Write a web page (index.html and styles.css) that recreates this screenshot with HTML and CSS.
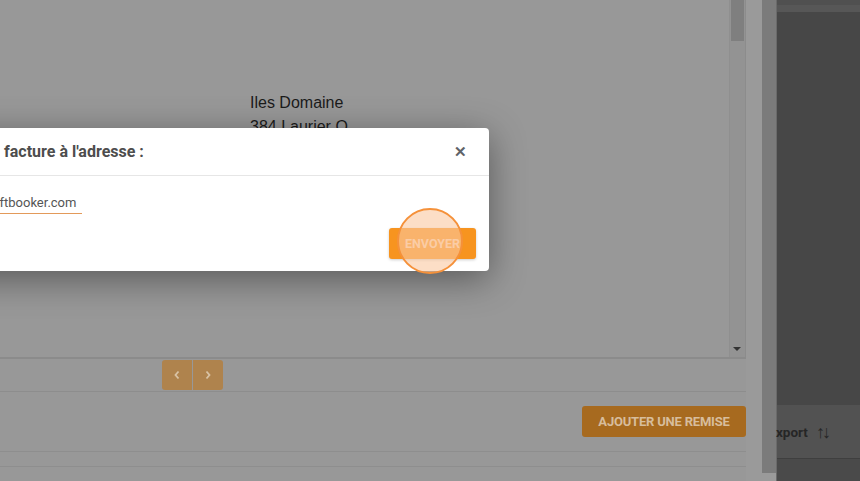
FILE: index.html
```html
<!DOCTYPE html>
<html lang="fr">
<head>
<meta charset="utf-8">
<title>Facture</title>
<link rel="stylesheet" href="styles.css">
</head>
<body>
<div class="screen">
  <div class="panel">
    <div class="doc">
      <div class="doc-content">
        <div class="addr">
          <p>Iles Domaine</p>
          <p>384 Laurier O</p>
        </div>
        <p class="date">Montréal, le 26/05/2022</p>
      </div>
      <div class="doc-scroll">
        <div class="doc-thumb"></div>
        <div class="doc-arrow"></div>
      </div>
    </div>
    <div class="pager">
      <button class="pg-btn"><svg width="8" height="10" viewBox="0 0 8 10"><path d="M5.5 1.5 L2.5 5 L5.5 8.5" fill="none" stroke="#d9c3a5" stroke-width="1.8"/></svg></button>
      <button class="pg-btn"><svg width="8" height="10" viewBox="0 0 8 10"><path d="M2.5 1.5 L5.5 5 L2.5 8.5" fill="none" stroke="#d9c3a5" stroke-width="1.8"/></svg></button>
    </div>
    <div class="actions">
      <button class="remise">Ajouter une remise</button>
    </div>
    <div class="row-thin"></div>
    <div class="row-rest"></div>
  </div>
  <div class="gap-strip"></div>
  <div class="vscroll"><div class="vthumb"></div></div>
  <div class="dark">
    <div class="dark-top"></div>
    <div class="dark-fill"></div>
    <div class="dark-band"><span class="xport">xport</span><span class="sort">↑↓</span></div>
    <div class="dark-fill2"></div>
  </div>

  <div class="modal">
    <div class="modal-head">
      <span class="modal-title">Envoyer la facture à l'adresse :</span>
      <span class="close">✕</span>
    </div>
    <div class="modal-body">
      <span class="email">info@draftbooker.com</span>
    </div>
    <div class="modal-foot">
      <button class="send">Envoyer</button>
    </div>
  </div>
  <div class="spot"></div>
</div>
</body>
</html>
```

FILE: styles.css
```css
* { box-sizing: border-box; }
html, body { margin: 0; padding: 0; }
body {
  width: 860px;
  height: 481px;
  overflow: hidden;
  font-family: Roboto, "Liberation Sans", Arial, sans-serif;
  background: #989898;
}
p { margin: 0; }
button { font-family: inherit; border: 0; padding: 0; }

.screen {
  position: relative;
  display: flex;
  width: 860px;
  height: 481px;
}

.panel {
  width: 746px;
  display: flex;
  flex-direction: column;
  background: #989898;
}

.doc {
  height: 359px;
  display: flex;
  border-bottom: 2px solid #8b8b8b;
}
.doc-content {
  flex: 1;
  position: relative;
  font-family: "Liberation Sans", Arial, sans-serif;
  color: #1b1b1b;
}
.addr {
  padding: 91px 0 0 250px;
  font-size: 16px;
  line-height: 24px;
}
.date {
  padding: 88px 0 0 200px;
  font-size: 17.6px;
  line-height: 20px;
}
.doc-scroll {
  width: 17px;
  background: #939393;
  border-left: 1px solid #8f8f8f;
  border-right: 1px solid #8c8c8c;
  position: relative;
}
.doc-thumb {
  margin: 0 1px;
  height: 41px;
  background: #7f7f7f;
}
.doc-arrow {
  position: absolute;
  left: 3px;
  bottom: 6px;
  width: 0;
  height: 0;
  border-left: 4px solid transparent;
  border-right: 4px solid transparent;
  border-top: 4px solid #333;
}

.pager {
  height: 33px;
  display: flex;
  padding: 1px 0 0 162px;
  border-bottom: 1px solid #8d8d8d;
}
.pg-btn {
  width: 30px;
  height: 30px;
  background: #af834d;
  display: flex;
  align-items: center;
  justify-content: center;
}
.pg-btn:first-child { border-radius: 3px 0 0 3px; margin-right: 1px; }
.pg-btn:last-child { border-radius: 0 3px 3px 0; }

.actions {
  height: 60px;
  display: flex;
  justify-content: flex-end;
  align-items: flex-start;
  padding-top: 14px;
  border-bottom: 1px solid #8e8e8e;
}
.remise {
  width: 164px;
  height: 31px;
  background: #a76a1f;
  border-radius: 3px;
  color: #d7bd9c;
  font-weight: 700;
  font-size: 13px;
  letter-spacing: -0.2px;
  text-transform: uppercase;
}
.row-thin {
  height: 15px;
  border-bottom: 1px solid #8e8e8e;
}
.row-rest { flex: 1; }

.gap-strip {
  width: 16px;
  background: #9a9a9a;
}
.vscroll {
  width: 14px;
  background: #9a9a9a;
}
.vthumb {
  height: 473px;
  background: #7b7b7b;
}

.dark {
  flex: 1;
  display: flex;
  flex-direction: column;
  background: #484848;
  border-left: 1px solid #6a6a6a;
}
.dark-top {
  height: 12px;
  background: #575757;
  border-top: 5px solid #505050;
}
.dark-fill { height: 393px; background: #474747; }
.dark-band {
  height: 54px;
  background: #525252;
  border-bottom: 1px solid #3f3f3f;
  display: flex;
  align-items: center;
  padding: 1px 0 0 0;
  color: #262626;
  font-size: 13.5px;
  font-weight: 700;
}
.xport { margin-left: -1px; }
.sort { margin-left: 8px; font-weight: 400; font-size: 18px; letter-spacing: -3px; }
.dark-fill2 { flex: 1; background: #4a4a4a; }

.modal {
  position: absolute;
  left: -250px;
  top: 128px;
  width: 739px;
  height: 143px;
  background: #fff;
  border-radius: 4px;
  box-shadow: 0 8px 36px rgba(0, 0, 0, 0.42);
  display: flex;
  flex-direction: column;
}
.modal-head {
  height: 48px;
  border-bottom: 1px solid #e6e6e6;
  display: flex;
  align-items: center;
  justify-content: space-between;
  padding: 0 22px 0 176px;
}
.modal-title {
  font-size: 16px;
  font-weight: 700;
  color: #4d4d4d;
}
.close {
  font-size: 15px;
  font-weight: 700;
  color: #5f6368;
}
.modal-body {
  height: 44px;
  padding: 16px 0 0 197px;
}
.email {
  display: inline-block;
  font-size: 13px;
  color: #555;
  padding-bottom: 3px;
  border-bottom: 1px solid #e39a5a;
  padding-right: 6px;
}
.modal-foot {
  display: flex;
  justify-content: flex-end;
  padding: 8px 13px 0 0;
}
.send {
  width: 87px;
  height: 31px;
  background: #f7941f;
  border-radius: 3px;
  color: #fbd3ae;
  font-size: 12.5px;
  font-weight: 700;
  text-transform: uppercase;
  box-shadow: 0 1px 3px rgba(0,0,0,0.2);
}
.spot {
  position: absolute;
  left: 397px;
  top: 208px;
  width: 66px;
  height: 66px;
  border-radius: 50%;
  background: rgba(250, 200, 160, 0.6);
  border: 2px solid #f5913a;
}
```
